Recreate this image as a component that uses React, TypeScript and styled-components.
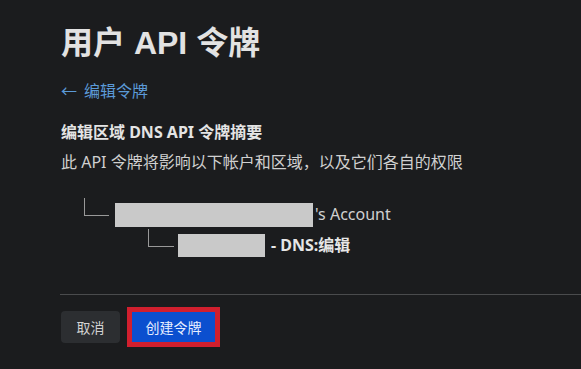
import React from "react";
import styled, { createGlobalStyle } from "styled-components";

const Global = createGlobalStyle`
  html, body { margin: 0; padding: 0; background: #1b1c1e; }
  body { font-family: "Noto Sans", "Noto Sans CJK SC", sans-serif; }
`;

const Page = styled.div`
  width: 581px;
  height: 369px;
  background: #1b1c1e;
  padding: 21px 0 0 61px;
  box-sizing: border-box;
  overflow: hidden;
  color: #d4d4d4;
`;

const Title = styled.h1`
  margin: 0;
  font-family: "Liberation Sans", "Noto Sans CJK SC", sans-serif;
  font-size: 32px;
  font-weight: 700;
  line-height: 44px;
  color: #e2e2e2;
`;

const BackLink = styled.a`
  display: flex;
  align-items: center;
  gap: 7px;
  margin-top: 15px;
  font-size: 16px;
  line-height: 22px;
  color: #5b9ad8;
  text-decoration: none;
`;

const Heading = styled.h2`
  margin: 19px 0 0;
  font-size: 16px;
  font-weight: 700;
  line-height: 22px;
  color: #e4e4e4;
`;

const Desc = styled.p`
  margin: 8px 0 0;
  font-size: 16px;
  line-height: 22px;
  color: #d0d0d0;
`;

const Tree = styled.div`
  margin-top: 30px;
  display: flex;
  flex-direction: column;
  gap: 7px;
`;

const Row = styled.div<{ $indent: number }>`
  display: flex;
  align-items: flex-start;
  padding-left: ${(p) => p.$indent}px;
  font-size: 16px;
  line-height: 24px;
`;

const Corner = styled.span<{ $w: number }>`
  width: ${(p) => p.$w}px;
  height: 17px;
  border-left: 1px solid #999;
  border-bottom: 1px solid #999;
  margin-top: -5px;
  flex: none;
`;

const Redacted = styled.span<{ $w: number; $h: number; $gap: number }>`
  width: ${(p) => p.$w}px;
  height: ${(p) => p.$h}px;
  background: #c9c9c9;
  margin-left: ${(p) => p.$gap}px;
  flex: none;
`;

const RowText = styled.span<{ $bold?: boolean }>`
  margin-left: ${(p) => (p.$bold ? 6 : 2)}px;
  font-weight: ${(p) => (p.$bold ? 700 : 400)};
  color: ${(p) => (p.$bold ? "#e6e6e6" : "#d0d0d0")};
  margin-top: ${(p) => (p.$bold ? -1 : -1)}px;
`;

const Divider = styled.hr`
  margin: 37px 0 0 -1px;
  border: none;
  border-top: 1px solid #4a4b4d;
`;

const Actions = styled.div`
  display: flex;
  align-items: center;
  gap: 7px;
  margin-top: 12px;
`;

const Button = styled.button<{ $primary?: boolean }>`
  font-family: "Noto Sans", "Noto Sans CJK SC", sans-serif;
  font-size: 14px;
  cursor: pointer;
  box-sizing: border-box;
  ${(p) =>
    p.$primary
      ? `
    width: 93px;
    height: 40px;
    border: 5px solid #d11f2e;
    background: #0b4fcf;
    color: #e6eeff;
    border-radius: 0;
  `
      : `
    width: 59px;
    height: 32px;
    border: none;
    background: #2c2e31;
    color: #d2d2d2;
    border-radius: 4px;
  `}
`;

export default function App() {
  return (
    <>
      <Global />
      <Page>
        <Title>用户 API 令牌</Title>
        <BackLink href="#">
          <span>←</span>
          <span>编辑令牌</span>
        </BackLink>
        <Heading>编辑区域 DNS API 令牌摘要</Heading>
        <Desc>此 API 令牌将影响以下帐户和区域，以及它们各自的权限</Desc>
        <Tree>
          <Row $indent={23}>
            <Corner $w={24} />
            <Redacted $w={198} $h={24} $gap={6} />
            <RowText>'s Account</RowText>
          </Row>
          <Row $indent={87}>
            <Corner $w={25} />
            <Redacted $w={87} $h={23} $gap={4} />
            <RowText $bold>- DNS:编辑</RowText>
          </Row>
        </Tree>
        <Divider />
        <Actions>
          <Button>取消</Button>
          <Button $primary>创建令牌</Button>
        </Actions>
      </Page>
    </>
  );
}
